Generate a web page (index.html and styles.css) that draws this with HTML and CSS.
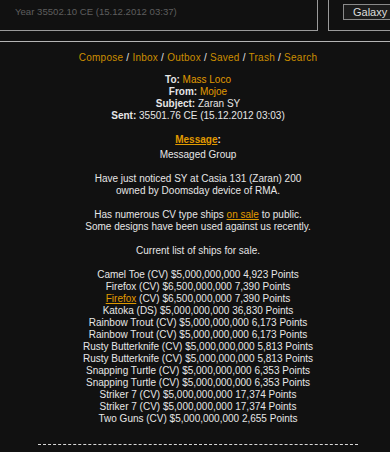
FILE: index.html
```html
<!DOCTYPE html>
<html lang="en">
  <head>
    <meta charset="UTF-8" />
    <meta name="viewport" content="width=device-width, initial-scale=1" />
    <title>Messages</title>
    <link rel="stylesheet" href="styles.css">
  </head>
  <body>
    <div class="topbar">
      <div class="status">
        <span class="year">Year 35502.10 CE (15.12.2012 03:37)</span>
      </div>
      <div class="side">
        <button class="galaxy">Galaxy</button>
      </div>
    </div>
    <div class="rule"></div>

    <div class="mail">
      <div class="nav">
        <a href="#">Compose</a> / <a href="#">Inbox</a> / <a href="#">Outbox</a> /
        <a href="#">Saved</a> / <a href="#">Trash</a> / <a href="#">Search</a>
      </div>

      <div class="headers">
        <b>To:</b> <a href="#">Mass Loco</a><br>
        <b>From:</b> <a href="#">Mojoe</a><br>
        <b>Subject:</b> Zaran SY<br>
        <b>Sent:</b> 35501.76 CE (15.12.2012 03:03)
      </div>

      <div class="label"><b><a class="u" href="#">Message</a>:</b></div>

      <div class="body">
        Messaged Group<br>
        <br>
        Have just noticed SY at Casia 131 (Zaran) 200<br>
        owned by Doomsday device of RMA.<br>
        <br>
        Has numerous CV type ships <a class="u" href="#">on sale</a> to public.<br>
        Some designs have been used against us recently.<br>
        <br>
        Current list of ships for sale.<br>
        <br>
        Camel Toe (CV) $5,000,000,000 4,923 Points<br>
        Firefox (CV) $6,500,000,000 7,390 Points<br>
        <a class="u" href="#">Firefox</a> (CV) $6,500,000,000 7,390 Points<br>
        Katoka (DS) $5,000,000,000 36,830 Points<br>
        Rainbow Trout (CV) $5,000,000,000 6,173 Points<br>
        Rainbow Trout (CV) $5,000,000,000 6,173 Points<br>
        Rusty Butterknife (CV) $5,000,000,000 5,813 Points<br>
        Rusty Butterknife (CV) $5,000,000,000 5,813 Points<br>
        Snapping Turtle (CV) $5,000,000,000 6,353 Points<br>
        Snapping Turtle (CV) $5,000,000,000 6,353 Points<br>
        Striker 7 (CV) $5,000,000,000 17,374 Points<br>
        Striker 7 (CV) $5,000,000,000 17,374 Points<br>
        Two Guns (CV) $5,000,000,000 2,655 Points
      </div>

      <div class="divider"></div>
    </div>
  </body>
</html>
```

FILE: styles.css
```css
body {
  margin: 0;
  background: #111111;
  color: #e6e6e6;
  font-family: "Liberation Sans", Arial, sans-serif;
  font-size: 10px;
  line-height: 12px;
  overflow: hidden;
}

a {
  color: #e09a00;
  text-decoration: none;
}

a.u {
  text-decoration: underline;
}

.topbar {
  display: flex;
  gap: 10px;
  height: 31px;
}

.status {
  flex: 0 0 318px;
  box-sizing: border-box;
  border-right: 1px solid #9a9a9a;
  border-bottom: 1px solid #9a9a9a;
  padding: 5px 0 0 15px;
}

.year {
  color: #5e5e5e;
  font-size: 9.6px;
  line-height: 14px;
}

.side {
  flex: 1;
  box-sizing: border-box;
  border-left: 1px solid #9a9a9a;
  border-bottom: 1px solid #9a9a9a;
  padding: 4px 0 0 14px;
}

.galaxy {
  font-family: "Liberation Sans", Arial, sans-serif;
  font-size: 11px;
  height: 16px;
  width: 56px;
  padding: 0 0 0 9px;
  text-align: left;
  background: #1c1c1c;
  color: #dddddd;
  border: 1px solid #8a8a8a;
  border-radius: 0;
}

.rule {
  height: 1px;
  margin-top: 10px;
  background: #b4b4b4;
}

.mail {
  padding: 10px 0 0 6px;
  text-align: center;
}

.nav {
  letter-spacing: 0.25px;
}

.nav a {
  color: #cc8e00;
}

.headers {
  margin-top: 10px;
}

.label {
  margin-top: 12px;
  margin-bottom: 3px;
}

.divider {
  width: 320px;
  margin: 19px auto 0;
  border-top: 1px dashed #d8d8d8;
}
```
